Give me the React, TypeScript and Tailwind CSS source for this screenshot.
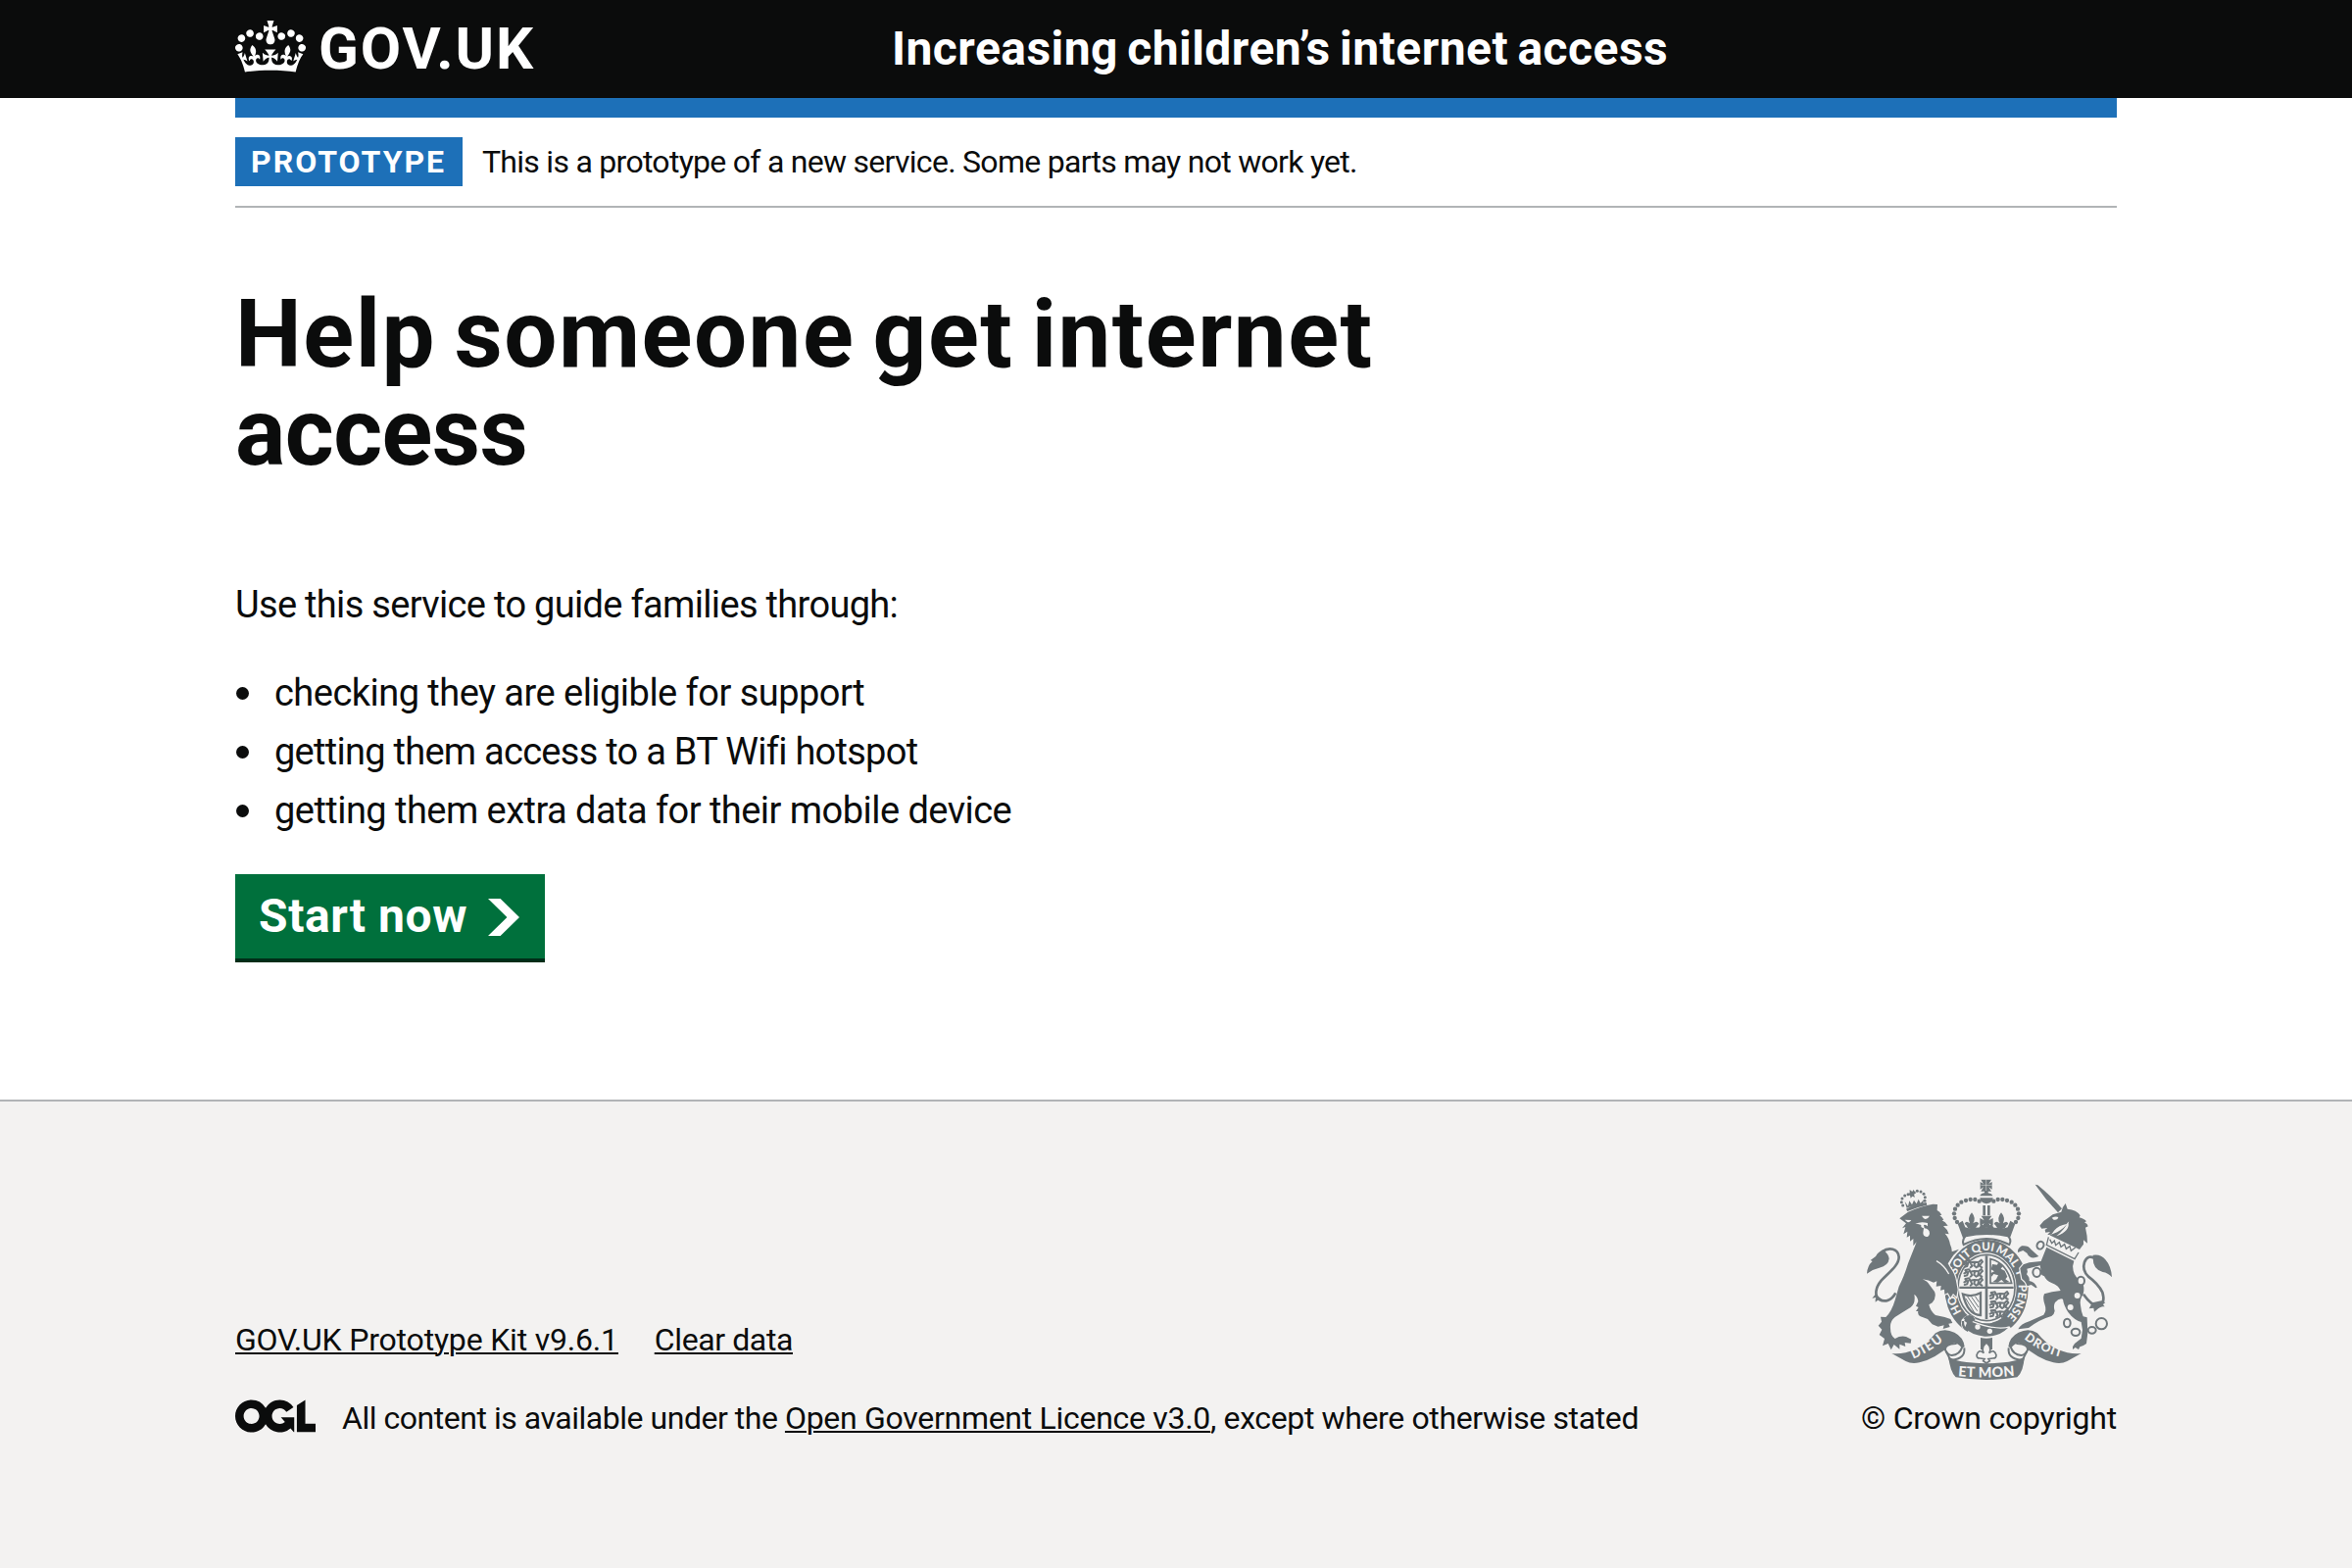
import type { ReactNode } from 'react';

function Crown() {
  return (
    <svg viewBox="0 0 132 97" className="h-[53px] w-[72px] fill-white" aria-hidden="true">
      <path d="M25 30.2c3.5 1.5 7.7-.2 9.1-3.7 1.5-3.6-.2-7.8-3.9-9.2-3.6-1.4-7.6.3-9.1 3.9-1.4 3.5.3 7.5 3.9 9zM9 39.5c3.6 1.5 7.8-.2 9.2-3.7 1.5-3.6-.2-7.8-3.9-9.1-3.6-1.5-7.6.2-9.1 3.8-1.4 3.5.3 7.5 3.8 9zM4.4 57.2c3.5 1.5 7.7-.2 9.1-3.8 1.5-3.6-.2-7.7-3.9-9.1-3.5-1.5-7.6.3-9.1 3.8-1.4 3.5.3 7.6 3.9 9.1zm38.3-21.4c3.5 1.5 7.7-.2 9.1-3.8 1.5-3.6-.2-7.7-3.9-9.1-3.6-1.5-7.6.3-9.1 3.8-1.3 3.6.4 7.7 3.9 9.1zm64.4-5.6c-3.6 1.5-7.8-.2-9.1-3.7-1.5-3.6.2-7.8 3.8-9.2 3.6-1.4 7.7.3 9.2 3.9 1.3 3.5-.4 7.5-3.9 9zm15.9 9.3c-3.6 1.5-7.7-.2-9.1-3.7-1.5-3.6.2-7.8 3.7-9.1 3.6-1.5 7.7.2 9.2 3.8 1.5 3.5-.3 7.5-3.8 9zm4.7 17.7c-3.6 1.5-7.8-.2-9.2-3.8-1.5-3.6.2-7.7 3.9-9.1 3.6-1.5 7.7.3 9.2 3.8 1.3 3.5-.4 7.6-3.9 9.1zM89.3 35.8c-3.6 1.5-7.8-.2-9.2-3.8-1.4-3.6.2-7.7 3.9-9.1 3.6-1.5 7.7.3 9.2 3.8 1.4 3.6-.3 7.7-3.9 9.1zM69.7 17.7l8.9 4.7V9.3l-8.9 2.8c-.2-.3-.5-.6-.9-.9L72.4 0H59.6l3.5 11.2c-.3.3-.6.5-.9.9l-8.8-2.8v13.1l8.8-4.7c.3.3.6.7.9.9l-5 15.4v.1c-.2.8-.4 1.6-.4 2.4 0 4.1 3.1 7.5 7 8.1h.2c.3 0 .7.1 1 .1.4 0 .7 0 1-.1h.2c4-.6 7.1-4.1 7.1-8.1 0-.8-.1-1.7-.4-2.4V34l-5.1-15.4c.4-.2.7-.6 1-.9zM66 92.8c16.9 0 32.8 1.1 47.1 3.2 4-16.9 8.9-26.7 14-33.5l-9.6-3.4c1 4.9 1.1 7.2 0 10.2-1.5-1.4-3-4.3-4.2-8.7L108.6 76c2.8-2 5-3.2 7.5-3.3-4.4 9.4-10 11.9-13.6 11.2-4.3-.8-6.3-4.6-5.6-7.9 1-4.7 5.7-5.9 8-.5 4.3-8.7-3-11.4-7.6-8.8 7.1-7.2 7.9-13.5 2.1-21.1-8 6.1-8.1 12.3-4.5 20.8-4.7-5.4-12.1-2.5-9.5 6.2 3.4-5.2 7.9-2 7.2 3.1-.6 4.3-6.4 7.8-13.5 7.2-10.3-.9-10.9-8-11.2-13.8 2.5-.5 7.1 1.8 11 7.3L80.2 60c-4.1 4.4-8 5.3-12.3 5.4 1.4-4.4 8-11.6 8-11.6H55.5s6.4 7.2 7.9 11.6c-4.2-.1-8-1-12.3-5.4l1.4 16.4c3.9-5.5 8.5-7.7 10.9-7.3-.3 5.8-.9 12.8-11.1 13.8-7.2.6-12.9-2.9-13.5-7.2-.7-5 3.8-8.3 7.1-3.1 2.7-8.7-4.6-11.6-9.4-6.2 3.7-8.5 3.6-14.7-4.6-20.8-5.8 7.6-5 13.9 2.2 21.1-4.7-2.6-11.9.1-7.7 8.8 2.3-5.5 7.1-4.2 8.1.5.7 3.3-1.3 7.1-5.7 7.9-3.5.7-9-1.8-13.5-11.2 2.5.1 4.7 1.3 7.5 3.3l-4.7-15.4c-1.2 4.4-2.7 7.2-4.3 8.7-1.1-3-.9-5.3 0-10.2l-9.5 3.4c5 6.9 9.9 16.7 14 33.5 14.8-2.1 30.8-3.2 47.7-3.2z" />
    </svg>
  );
}

function OglMark() {
  return (
    <svg viewBox="0 0 483.2 195.7" className="-mt-[5px] h-[34px] w-[82px] shrink-0 fill-[#0b0c0c]" aria-hidden="true">
      <path d="M421.5 142.8V.1l-50.7 32.3v161.1h112.4v-50.7zm-122.3-9.6A47.12 47.12 0 0 1 221 97.8c0-26 21.1-47.1 47.1-47.1 16.7 0 31.4 8.7 39.7 21.8l42.7-27.2A97.63 97.63 0 0 0 268.1 0c-36.5 0-68.3 20.1-85.1 49.7A98 98 0 0 0 97.8 0C43.9 0 0 43.9 0 97.8s43.9 97.8 97.8 97.8c36.5 0 68.3-20.1 85.1-49.7a97.76 97.76 0 0 0 149.6 25.4l19.4 22.2h3v-87.8h-80l24.3 27.5zM97.8 145c-26 0-47.1-21.1-47.1-47.1s21.1-47.1 47.1-47.1 47.1 21.1 47.1 47.1S123.8 145 97.8 145" />
    </svg>
  );
}

const G = '#6f777b';
const W = '#f3f2f1';

const pearls = [
  [416, 107], [403, 102], [389, 102], [375, 105], [361, 110], [350, 119], [342, 131], [339, 145], [341, 159], [348, 171],
];
const smallPearls = [
  [182, 120], [178, 110], [180, 99], [188, 90], [198, 86], [216, 80], [226, 76], [237, 78], [246, 85], [250, 95], [249, 106],
];

function Pair({ children }: { children: ReactNode }) {
  return (
    <>
      <g>{children}</g>
      <g transform="translate(876 0) scale(-1 1)">{children}</g>
    </>
  );
}

/* Three walking lions, stacked in a quarter of the shield. */
function Lions() {
  return (
    <g fill="none" stroke={G} strokeWidth="6" strokeLinecap="round" strokeLinejoin="round">
      {[0, 28, 55].map((y) => (
        <path key={y} transform={`translate(0 ${y})`} d="M2 16l8-4-5-6 12-2 3 7 12-2 14 1 8-7 4 6-5 5-4 8 7 4M14 12l-3 10-8 2M22 13l4 9-5 4M34 12l-2 8 7 6M46 14l-3 10" />
      ))}
    </g>
  );
}

function RoyalArms() {
  return (
    <svg viewBox="69 39 756 618" className="h-[206px] w-[252px]" fill={G} aria-hidden="true">
      <defs>
        <path id="garter" d="M340 373A98 115 0 0 1 536 373A98 115 0 0 1 340 373A98 115 0 0 1 438 258" />
        <path id="scroll-left" d="M208 592Q262 572 315 526" />
        <path id="scroll-right" d="M550 525Q600 570 676 587" />
        <path id="scroll-mid" d="M345 642Q438 651 535 640" />
      </defs>

      {/* Imperial crown */}
      <path d="M421 41h32l-8 13 10-6v23l-10-7 8 13h-32l8-13-10 7V48l10 6zM432 74h11v8q12 2 14 9h-39q3-8 14-9zM418 97h40q0 15-20 18-19-3-20-18z" />
      <path d="M437 41v34M421 58h34" stroke={W} strokeWidth="1.5" />
      <path d="M427 120h8v31h-8zM441 120h8v31h-8z" />
      <Pair>
        {pearls.map(([x, y]) => (
          <circle key={`${x}-${y}`} cx={x} cy={y} r="6.5" />
        ))}
        <path d="M393 142q14 17 4 33 12-10 18 1-5 4-10 13l-12 4-12-4q-3-9-10-13 5-11 16-1-8-17 6-33z" />
        <path d="M350 176l15-9 8 20 20 6 22-4 8-13 15 15v20q-37 0-72 9z" />
      </Pair>
      <path d="M422 152h32l-9 14 13-7v23l-13-7 9 13h-32l9-13-13 7v-23l13 7z" />
      <path d="M362 193q76-12 153 0l-12 24q-65-14-130 0z" />
      <path d="M374 214q64-14 130 0 12 12 4 26-70-36-140 0-6-14 6-26z" fill={W} stroke={G} strokeWidth="6" />

      {/* Garter and shield */}
      <ellipse cx="438" cy="374" rx="128" ry="149" />
      <ellipse cx="438" cy="373" rx="92" ry="108" fill={W} />
      <ellipse cx="438" cy="372" rx="87" ry="101" fill="none" stroke={G} strokeWidth="5" />
      <path d="M355 368h166v7H355zM434 274h8v194h-8z" />
      <g transform="translate(368 284)"><Lions /></g>
      <g transform="translate(447 381)"><Lions /></g>
      <path d="M450 284q50 12 65 74h-65z" fill="none" stroke={G} strokeWidth="5" />
      <path d="M456 300l14 2 6-8 12 12-6 8 12 6 8 18-6 8 12 8-14 4-10-10-12 8-14-2 10-8 6-12-14-4-6 8-4-10 12-6-10-6z" />
      <path d="M366 392q28 10 54-4v68q-40-2-54-64z" fill="none" stroke={G} strokeWidth="7" />
      <path d="M380 399l30 44M392 400l22 32M403 398l12 18M374 404l28 46" stroke={G} strokeWidth="3" />
      <g fill={W} fontFamily="Lato, sans-serif" fontWeight="900" fontSize="35" textAnchor="middle">
        <text><textPath href="#garter" startOffset="80">SOIT</textPath></text>
        <text><textPath href="#garter" startOffset="157">QUI</textPath></text>
        <text><textPath href="#garter" startOffset="232">MAL</textPath></text>
        <text><textPath href="#garter" startOffset="290">Y</textPath></text>
        <text><textPath href="#garter" startOffset="378">PENSE</textPath></text>
        <text><textPath href="#garter" startOffset="620">HO</textPath></text>
      </g>
      <path d="M362 470q20-26 42-4l-8 8q74 28 112 16l10 12q-34 30-84 26-42-4-66-26-12-14-6-32z" fill={W} />
      <path d="M384 461q12-4 20 8l-10 8q62 26 110 18-28 28-72 26-40-4-60-26l6-16-8-6q2-10 14-12z" />
      <path d="M366 474q-2 22 16 30M370 468q12-14 28-4" fill="none" stroke={G} strokeWidth="7" />
      <circle cx="411" cy="492" r="8" fill={W} />
      <circle cx="448" cy="505" r="8" fill={W} />

      {/* Lion */}
      <path
        stroke={W}
        strokeWidth="7"
        paintOrder="stroke"
        d="M172 160l16-12 10-8q40-18 76-24l14 1-1 18q8 4 14 14l-6 2q8 5 12 13l-5 2q10 4 18 16l-14 1q12 9 17 25l-12-2q13 14 16 34 6 12 5 22l22-8q-8 10-17 18-10 14-17 26l8 14Q342 330 345 352l5 26-4 22-10-10-8 12-8-14-10 4-1-15-12 3 2-14-15 2 2-16-10 4q-14-8-34-10 16 6 22 18l15 20q7 16-7 34l-10 6q4 20 20 32l28 6 18 6 6 12-12 2 4 10-21 6 3-11-18 4-18-7-14-16-22-8q-10-6-7-16h-7l8-12-8-4 7-14q-1-14-12-22 5 28-11 40-26 16-48 30-16 12-14 34 0 24 14 32 17-10 34-6l16 8-2 12-18-2 2 12-18-7v15l-17-14-9 16-9-19-17 7 6-22-16-12 8-16-11-12 10-12-3-15 16 1q18-18 28-52l12-42q16-30 28-70l26-66-10 12v-22l-10 8v-18l-10 6 2-18-12 8 6-22-10 4 12-15z"
      />
      <path d="M160 388C148 410 128 418 110 408C94 396 98 372 116 350C138 326 170 304 170 278C168 252 140 246 118 262" fill="none" stroke={G} strokeWidth="8" />
      <path d="M122 256q-16 6-23 20l-16 12 6 3q-16 14-17 38 18-14 38-18 28-6 30-28-2-14-18-27zM98 392l-10 12 12-2q-4 8-2 14 12-12 26-4z" />
      <path d="M188 164l20 1q-4 8-12 6zM240 152l24 0q-8 14-18 8z" fill={W} />
      <path d="M220 176q18-8 38-2v10q-6-6-12-4l2 10q16 2 16 16-2 10-10 10-10-2-10-12l2-14q-10-2-8-10-10-4-18-4z" fill={W} />
      <path d="M285 290q24 14 38 40" fill="none" stroke={W} strokeWidth="4" />
      <path d="M192 131q28-16 62-20l2 8q-32 6-60 19zM203 72l8 6 4-7 2 8 6 2-7 5 3 9-8-3-5 6-2-9-8-1 7-6zM188 108l10 14 4-16 8 12 6-14 8 11 6-14 6 12 10-10-2 10q-28 4-50 15z" />
      {smallPearls.map(([x, y]) => (
        <circle key={`${x}-${y}`} cx={x} cy={y} r="4.5" />
      ))}

      {/* Unicorn */}
      <path d="M587 56l8 2q42 34 74 72l-12 12q-38-40-70-86z" />
      <path d="M601 182q10-16 26-24l14-10 26-8q2-14 13-26l6 17q28 2 39 20l-3 6q16 4 22 12l-6 3q10 4 11 12l-8 4q6 24 6 48l-12-10v13l-12 16-92-44q26-8 42-22 16-14 18-20l-8 8q-24 4-38 20-8 16-20 12l8-8-14 2-2-8 8-6-18 2z" />
      <path d="M638 158q12-6 20-2-2 10-14 8zM688 170q8 28-36 44 28-24 36-44z" fill={W} />
      <path
        stroke={W}
        strokeWidth="7"
        paintOrder="stroke"
        d="M622 248l84 42q-6 14-2 30 4 20 26 32 10 20 4 40-12 16-8 34 2 20 8 34l12 3 2 48-4 32q-10 8-20 10l-4 8-10-6-8 6q-2-10 6-18l20-16 4-26-4-24q-22-6-40-30-14-22-16-40-12-4-24 10-6 12-1 26-2 12-10 16-36 10-70 36l-32 4q8-16 34-24l44-20q10-14 4-30-8-20-2-34 22-8 50-10-6-16-28-24-16-6-22-20l-26-12-22-10-6 16q10 10 8 20 16 2 24 20l-4 2-14-10-12 4q-6-16-16-22l-6-32 10-12 18-6 36-4z"
      />
      <path d="M598 276q-26 12-36-10l-12-8-16 6q-2-12 12-20 20-2 28 10z" />
      <path d="M630 218l96 48-14 22-92-46z" fill={W} />
      <path d="M628 217l-6 24 86 43 12-20M632 224l6 12 8-8 4 14 11-9 5 14 11-8 5 14 11-8 4 14 13-10" fill="none" stroke={G} strokeWidth="4" />
      <path d="M562 314l40-10 6 36-26 6q-4-14-18-22z" fill={W} />
      <path d="M735 392q24 34 46 38 22-10 12-44Q780 360 750 338 730 318 738 294 748 268 774 284" fill="none" stroke={G} strokeWidth="8" />
      <path d="M764 272q24-4 38 14 18 20 20 54-12-14-28-16-30-8-30-42zM790 412l12 6-8 4 6 8q-12-2-18 4l-14 12-2-12-14 2 10-18z" />
      <g fill={W} stroke={G} strokeWidth="6">
        <ellipse cx="603" cy="242" rx="10" ry="12" transform="rotate(25 603 242)" />
        <ellipse cx="592" cy="325" rx="12" ry="14" />
        <ellipse cx="727" cy="351" rx="11" ry="13" />
        <ellipse cx="685" cy="480" rx="10" ry="13" />
        <ellipse cx="711" cy="508" rx="13" ry="11" />
        <ellipse cx="761" cy="502" rx="12" ry="10" />
        <circle cx="790" cy="482" r="17" />
      </g>
      <circle cx="716" cy="396" r="9" fill={W} />
      <circle cx="695" cy="432" r="9" fill={W} />

      {/* Fleur-de-lis pendant */}
      <path d="M420 525q18 4 36 0v36h-36z" />
      <path d="M438 540q18 16 8 32 16-14 22 6 0 10-10 10l-14 2 4 6-10 7-10-7 4-6-14-2q-10 0-10-10 6-20 22-6-10-16 8-32z" fill={W} stroke={G} strokeWidth="5" />

      {/* Motto scroll */}
      <Pair>
        <path d="M148 573q34 4 72-12 38-18 62-50 26-18 58-2 28 14 31 44l-6 2q-18-22-34-10-50 44-98 56-24 6-42-4z" />
        <path d="M344 543q-34 2-32 20 8 16 20 16 24-2 32-26-16-18-20-10z" fill={W} stroke={G} strokeWidth="6" />
        <path d="M314 566q10 16 14 34M370 556q4 34-38 37" fill="none" stroke={G} strokeWidth="6" />
      </Pair>
      <path d="M322 582q20 20 116 22 96-2 116-22-2 46-22 64-94 16-188 0-18-18-22-64z" />
      <g fill={W} fontFamily="Lato, sans-serif" fontWeight="900" fontSize="43">
        <text fontSize="39"><textPath href="#scroll-left" textLength="108" startOffset="6">DIEU</textPath></text>
        <text fontSize="37"><textPath href="#scroll-right" textLength="128" startOffset="4">DROIT</textPath></text>
        <text><textPath href="#scroll-mid" textLength="174" startOffset="6">ET MON</textPath></text>
      </g>
    </svg>
  );
}

const steps = [
  { text: 'checking they are eligible for support', tracking: 'tracking-[-0.53px]' },
  { text: 'getting them access to a BT Wifi hotspot', tracking: 'tracking-[-0.73px]' },
  { text: 'getting them extra data for their mobile device', tracking: 'tracking-[-0.54px]' },
];

export default function App() {
  return (
    <div className="flex h-[1600px] w-[2400px] flex-col overflow-hidden bg-white font-['Roboto',sans-serif] text-[#0b0c0c]">
      <header className="h-[100px] shrink-0 bg-[#0b0c0c] text-white">
        <div className="mx-auto flex h-full w-[1920px] items-center">
          <div className="flex w-[670px] items-center gap-[13px]">
            <div className="pb-[5px]"><Crown /></div>
            <span className="text-[60px] leading-[100px] font-bold tracking-[1.9px]">GOV.UK</span>
          </div>
          <span className="text-[48px] leading-[98px] font-bold tracking-[0.45px] whitespace-nowrap [word-spacing:-3px]">Increasing children’s internet access</span>
        </div>
      </header>

      <div className="mx-auto w-[1920px] shrink-0">
        <div className="h-[20px] bg-[#1d70b8]" />
        <div className="flex items-center gap-[20px] border-b-2 border-[#b1b4b6] py-[20px]">
          <strong className="w-[232px] bg-[#1d70b8] pl-[16px] text-[32px] leading-[50px] font-bold tracking-[2px] text-white">PROTOTYPE</strong>
          <span className="text-[32px] leading-[50px] tracking-[-0.72px] whitespace-nowrap">This is a prototype of a new service. Some parts may not work yet.</span>
        </div>

        <main className="pt-[79px]">
          <h1 className="w-[1260px] text-[96px] leading-[100px] font-bold">
            <span className="block h-[100px] tracking-[1.5px] whitespace-nowrap [word-spacing:-7px]">Help someone get internet</span>
            <span className="block h-[100px] tracking-[-0.6px]">access</span>
          </h1>
          <p className="mt-[101px] text-[38px] leading-[50px] tracking-[-0.68px]">Use this service to guide families through:</p>
          <ul className="mt-[40px] flex flex-col gap-[10px] text-[38px] leading-[50px]">
            {steps.map((s) => (
              <li key={s.text} className="flex items-center">
                <span className="mr-[26px] ml-[1px] size-[13px] rounded-full bg-[#0b0c0c]" />
                <span className={s.tracking}>{s.text}</span>
              </li>
            ))}
          </ul>
          <button className="mt-[40px] flex h-[90px] w-[316px] items-center border-b-4 border-[#002d18] bg-[#00703c] pl-[24px] text-[48px] font-bold text-white">
            <span className="tracking-[0.6px] whitespace-nowrap">Start now</span>
            <svg viewBox="0 0 33 40" preserveAspectRatio="none" className="mt-[2px] ml-[21px] h-[38px] w-[32px] fill-white" aria-hidden="true">
              <path d="M0 0h13l20 20-20 20H0l20-20z" />
            </svg>
          </button>
        </main>
      </div>

      <footer className="mt-[140px] flex-1 border-t-2 border-[#b1b4b6] bg-[#f3f2f1]">
        <div className="mx-auto flex w-[1920px] items-end justify-between pt-[79px]">
          <div className="text-[32px] leading-[40px]">
            <div className="flex gap-[37px] underline decoration-2 underline-offset-[2px]">
              <a className="tracking-[-0.19px]">GOV.UK Prototype Kit v9.6.1</a>
              <a className="tracking-[-0.4px]">Clear data</a>
            </div>
            <div className="mt-[40px] flex items-center">
              <OglMark />
              <p className="ml-[27px] whitespace-nowrap">
                <span className="tracking-[-0.47px]">All content is available under the </span>
                <a className="tracking-[-0.29px] underline decoration-2 underline-offset-[2px]">Open Government Licence v3.0</a>
                <span className="tracking-[-0.37px]">, except where otherwise stated</span>
              </p>
            </div>
          </div>
          <div className="flex w-[261px] flex-col items-center">
            <RoyalArms />
            <span className="mt-[18px] text-[32px] leading-[40px] tracking-[-0.24px] whitespace-nowrap">© Crown copyright</span>
          </div>
        </div>
      </footer>
    </div>
  );
}
